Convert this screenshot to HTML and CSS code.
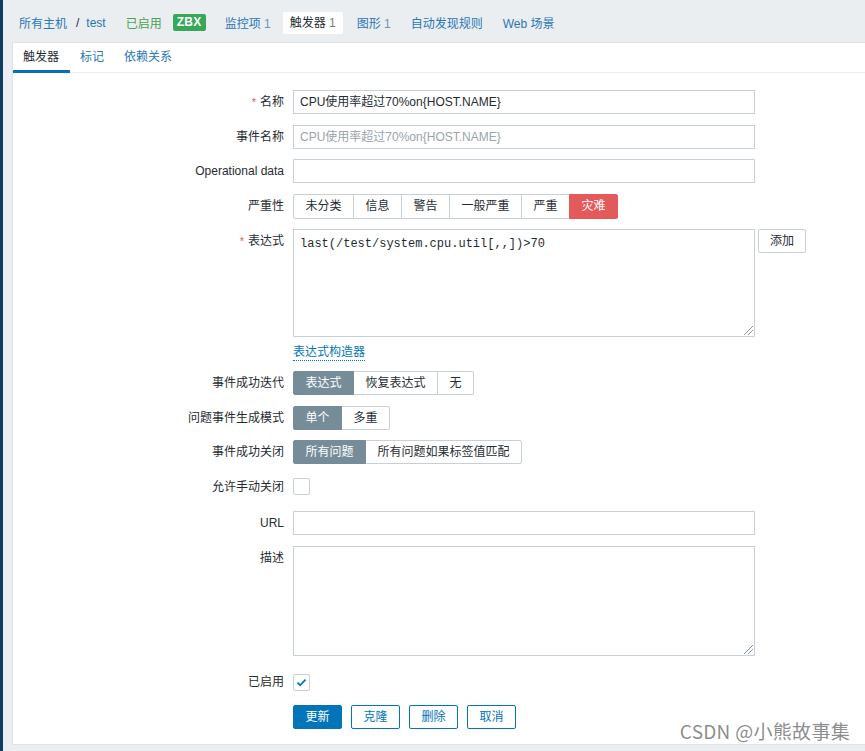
FILE: index.html
```html
<!DOCTYPE html>
<html lang="zh-CN">
<head>
<meta charset="utf-8">
<title>触发器</title>
<link rel="stylesheet" href="styles.css">
</head>
<body>
<div class="page">
  <nav class="topnav">
    <a class="crumb">所有主机</a><span class="sep">/</span><a class="crumb">test</a>
    <span class="status">已启用</span>
    <span class="badge">ZBX</span>
    <a class="navlink nl-items">监控项 <span class="count">1</span></a>
    <span class="navtab">触发器 <span class="count">1</span></span>
    <a class="navlink nl-graphs">图形 <span class="count">1</span></a>
    <a class="navlink nl-disc">自动发现规则</a>
    <a class="navlink nl-web">Web 场景</a>
  </nav>

  <main class="panel">
    <div class="subtabs">
      <a class="subtab active">触发器</a>
      <a class="subtab">标记</a>
      <a class="subtab">依赖关系</a>
    </div>

    <form class="form">
      <label class="lbl"><span class="req">*</span>名称</label>
      <div class="field"><div class="input">CPU使用率超过70%on{HOST.NAME}</div></div>

      <label class="lbl">事件名称</label>
      <div class="field"><div class="input placeholder">CPU使用率超过70%on{HOST.NAME}</div></div>

      <label class="lbl">Operational data</label>
      <div class="field"><div class="input"></div></div>

      <label class="lbl">严重性</label>
      <div class="field">
        <div class="seg severity">
          <span class="seg-item">未分类</span>
          <span class="seg-item">信息</span>
          <span class="seg-item">警告</span>
          <span class="seg-item">一般严重</span>
          <span class="seg-item">严重</span>
          <span class="seg-item disaster">灾难</span>
        </div>
      </div>

      <label class="lbl"><span class="req">*</span>表达式</label>
      <div class="field">
        <div class="expr-row">
          <div class="textarea mono">last(/test/system.cpu.util[,,])&gt;70<span class="grip"></span></div>
          <span class="btn-gray">添加</span>
        </div>
        <a class="builder">表达式构造器</a>
      </div>

      <label class="lbl">事件成功迭代</label>
      <div class="field">
        <div class="seg">
          <span class="seg-item on">表达式</span>
          <span class="seg-item">恢复表达式</span>
          <span class="seg-item">无</span>
        </div>
      </div>

      <label class="lbl">问题事件生成模式</label>
      <div class="field">
        <div class="seg">
          <span class="seg-item on">单个</span>
          <span class="seg-item">多重</span>
        </div>
      </div>

      <label class="lbl">事件成功关闭</label>
      <div class="field">
        <div class="seg">
          <span class="seg-item on">所有问题</span>
          <span class="seg-item">所有问题如果标签值匹配</span>
        </div>
      </div>

      <label class="lbl">允许手动关闭</label>
      <div class="field center"><span class="check"></span></div>

      <label class="lbl gap-url">URL</label>
      <div class="field gap-url"><div class="input"></div></div>

      <label class="lbl">描述</label>
      <div class="field"><div class="textarea desc"><span class="grip"></span></div></div>

      <label class="lbl gap-en">已启用</label>
      <div class="field center gap-en">
        <span class="check checked">
          <svg viewBox="0 0 16 16" width="13" height="13"><path d="M3 8.2 L6.3 11.4 L13 4.6" fill="none" stroke="#0275b8" stroke-width="2.2"/></svg>
        </span>
      </div>

      <div class="empty"></div>
      <div class="field buttons">
        <span class="btn primary">更新</span>
        <span class="btn">克隆</span>
        <span class="btn">删除</span>
        <span class="btn">取消</span>
      </div>
    </form>
  </main>

  <div class="watermark">CSDN @小熊故事集</div>
</div>
</body>
</html>
```

FILE: styles.css
```css
* { box-sizing: border-box; }

html, body {
  margin: 0;
  padding: 0;
}

body {
  font-family: "Liberation Sans", Arial, "Noto Sans CJK SC", sans-serif;
  font-size: 12px;
  color: #1f2c33;
  background: #ebeef0;
}

.page {
  position: relative;
  height: 751px;
  display: flex;
  flex-direction: column;
  border-left: 3px solid #0f3d5f;
  background: #ebeef0;
  padding-bottom: 6px;
}

/* top navigation */
.topnav {
  height: 42px;
  padding: 3px 0 0 16px;
  display: flex;
  align-items: center;
  white-space: nowrap;
}

.crumb, .navlink {
  color: #2a77b6;
  text-decoration: none;
}

.sep {
  color: #1f2c33;
  margin: 0 7px 0 9px;
}

.status {
  color: #4aa152;
  margin-left: 20px;
}

.badge {
  margin-left: 11px;
  background: #36a85a;
  color: #fff;
  font-weight: bold;
  font-size: 12px;
  height: 17px;
  line-height: 17px;
  padding: 0 4px;
  border-radius: 2px;
  letter-spacing: 0.3px;
}

.count {
  color: #6f93b3;
}

.nl-items { margin-left: 19px; }

.navtab {
  margin-left: 12px;
  background: #fff;
  height: 22px;
  line-height: 22px;
  padding: 0 7px;
  color: #1f2c33;
  border-radius: 2px;
}

.navtab .count { color: #6b7d87; }

.nl-graphs { margin-left: 14px; }
.nl-disc { margin-left: 20px; }
.nl-web { margin-left: 20px; }

/* panel */
.panel {
  flex: 1;
  margin-left: 9px;
  background: #fff;
  border: 1px solid #dde3e7;
  border-right: none;
}

.subtabs {
  height: 30px;
  display: flex;
  border-bottom: 1px solid #ebeef0;
}

.subtab {
  padding: 0 10px;
  line-height: 29px;
  color: #2a77b6;
  border-bottom: 3px solid transparent;
  height: 30px;
  margin-bottom: -1px;
}

.subtab.active {
  color: #1f2c33;
  border-bottom-color: #0a6eb4;
  padding: 0 11px 0 10px;
}

/* form grid */
.form {
  display: grid;
  grid-template-columns: 271px 462px 60px;
  column-gap: 9px;
  row-gap: 10.5px;
  padding-top: 17px;
  align-items: start;
}

.lbl {
  grid-column: 1;
  text-align: right;
  line-height: 24px;
  color: #1f2c33;
  white-space: nowrap;
}

.req {
  color: #e45959;
  margin-right: 4px;
  font-size: 11px;
}

.field {
  grid-column: 2 / 4;
  min-height: 24px;
}

.field.center {
  display: flex;
  align-items: center;
  height: 24px;
}

.empty { grid-column: 1; }

.gap-url { margin-top: 2px; }
.gap-en { margin-top: 4px; }

.input {
  width: 462px;
  height: 24px;
  border: 1px solid #c6d0d6;
  padding: 0 6px;
  line-height: 22px;
  white-space: nowrap;
  overflow: hidden;
  color: #1f2c33;
}

.input.placeholder { color: #9aa4aa; }

.seg {
  display: inline-flex;
  border-radius: 2px;
}

.seg-item {
  height: 24px;
  line-height: 22px;
  padding: 0 11.5px;
  border: 1px solid #c6d0d6;
  margin-left: -1px;
  background: #fff;
  color: #1f2c33;
  white-space: nowrap;
}

.seg-item:first-child {
  margin-left: 0;
  border-radius: 2px 0 0 2px;
}

.seg-item:last-child { border-radius: 0 2px 2px 0; }

.severity .seg-item { height: 25px; line-height: 23px; }

.seg-item.on {
  background: #768d99;
  border-color: #768d99;
  color: #fff;
  position: relative;
}

.seg-item.disaster {
  background: #e45959;
  border-color: #e45959;
  color: #fff;
}

.expr-row {
  display: flex;
  align-items: flex-start;
  gap: 3px;
}

.textarea {
  position: relative;
  width: 462px;
  height: 108px;
  border: 1px solid #c6d0d6;
  padding: 7px 6px;
  flex: none;
}

.textarea.desc { height: 110px; }

.mono {
  font-family: "Liberation Mono", "Courier New", monospace;
  font-size: 12px;
  color: #1f2c33;
}

.grip {
  position: absolute;
  right: 1px;
  bottom: 1px;
  width: 9px;
  height: 9px;
  background: linear-gradient(135deg, transparent 45%, #8c969c 45%, #8c969c 52%, transparent 52%, transparent 70%, #8c969c 70%, #8c969c 77%, transparent 77%);
}

.btn-gray {
  height: 24px;
  line-height: 22px;
  padding: 0 11px;
  border: 1px solid #c6d0d6;
  border-radius: 2px;
  color: #1f2c33;
  background: #fff;
}

.builder {
  display: inline-block;
  margin-top: 6.5px;
  color: #0275b8;
  line-height: 16px;
  border-bottom: 1px dotted #0275b8;
}

.check {
  width: 17px;
  height: 17px;
  border: 1px solid #c6d0d6;
  border-radius: 2px;
  display: inline-flex;
  align-items: center;
  justify-content: center;
  background: #fff;
}

.buttons {
  display: flex;
  gap: 9px;
}

.btn {
  height: 24px;
  line-height: 22px;
  padding: 0 11.5px;
  border: 1px solid #0275b8;
  border-radius: 2px;
  color: #0275b8;
  background: #fff;
}

.btn.primary {
  background: #0275b8;
  color: #fff;
}

.watermark {
  position: absolute;
  right: 15px;
  bottom: 9px;
  font-family: "Noto Sans CJK SC", sans-serif;
  font-size: 19px;
  line-height: 22px;
  color: rgba(110, 110, 110, 0.8);
  letter-spacing: 0.3px;
}
```
